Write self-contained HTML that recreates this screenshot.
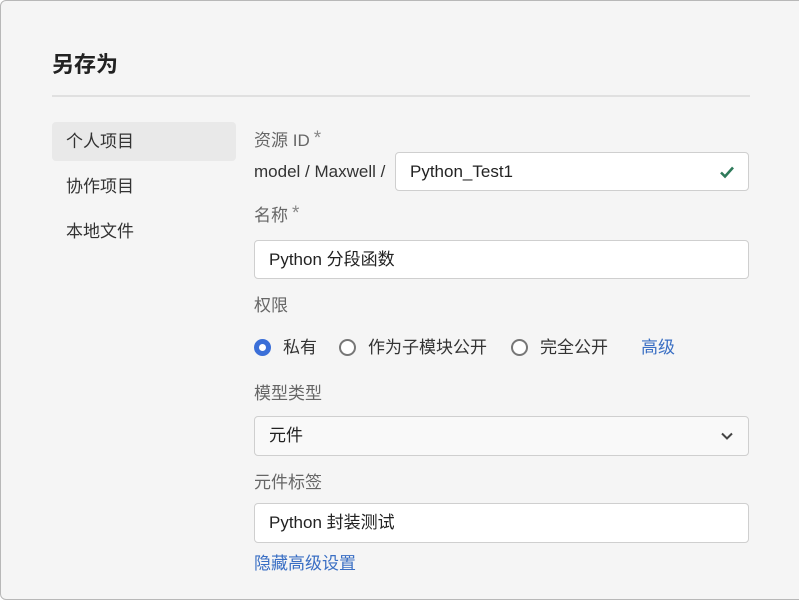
<!DOCTYPE html>
<html><head><meta charset="utf-8"><style>
*{box-sizing:border-box;margin:0;padding:0}
body{width:799px;height:579px;overflow:hidden;background:#fff;font-family:"Liberation Sans","Noto Sans CJK SC",sans-serif;color:#333}
.dlg{position:absolute;left:0;top:0;width:812px;height:600px;background:#f5f5f5;border:1px solid #b8b8b8;border-radius:6px}
.abs{position:absolute;white-space:nowrap}
.title{left:52px;top:52px;font-size:22px;line-height:26px;font-weight:bold;color:#222}
.hr{left:52px;top:95px;width:698px;height:2px;background:#e0e0e0}
.side{left:52px;width:184px;height:39px;font-size:17px;line-height:39px;padding-left:14px;color:#333;border-radius:4px}
.lbl{left:254px;font-size:17px;line-height:20px;color:#666}
.lbl i{font-style:normal;color:#888;font-size:19px;margin-left:4px;position:relative;top:-2px}
.inp{background:#fff;border:1px solid #cfcfcf;border-radius:4px;font-size:17px;line-height:37px;padding-left:14px;color:#222}
.rad{width:17px;height:17px;border-radius:50%;border:2px solid #777;background:#fff}
.txt{font-size:17px;line-height:20px;color:#333}
a{color:#3a6fc4;text-decoration:none}
</style></head><body>
<div class="dlg"></div>
<div class="abs title">另存为</div>
<div class="abs hr"></div>
<div class="abs side" style="top:122px;background:#e9e9e9">个人项目</div>
<div class="abs side" style="top:167px">协作项目</div>
<div class="abs side" style="top:212px">本地文件</div>

<div class="abs lbl" style="top:131px">资源 ID<i>*</i></div>
<div class="abs txt" style="left:254px;top:162px">model / Maxwell /</div>
<div class="abs inp" style="left:395px;top:152px;width:354px;height:39px">Python_Test1
<svg style="position:absolute;right:13px;top:12px" width="16" height="14" viewBox="0 0 16 14"><path d="M2 7.5L6 11.5L14 2.5" fill="none" stroke="#2e7a5a" stroke-width="2.6"/></svg></div>

<div class="abs lbl" style="top:206px">名称<i>*</i></div>
<div class="abs inp" style="left:254px;top:240px;width:495px;height:39px">Python 分段函数</div>

<div class="abs lbl" style="top:296px">权限</div>
<div class="abs rad" style="left:254px;top:339px;border:5px solid #3b6fd8"></div>
<div class="abs txt" style="left:283px;top:338px">私有</div>
<div class="abs rad" style="left:339px;top:339px"></div>
<div class="abs txt" style="left:368px;top:338px">作为子模块公开</div>
<div class="abs rad" style="left:511px;top:339px"></div>
<div class="abs txt" style="left:540px;top:338px">完全公开</div>
<div class="abs txt" style="left:641px;top:338px"><a>高级</a></div>

<div class="abs lbl" style="top:384px">模型类型</div>
<div class="abs inp" style="left:254px;top:416px;width:495px;height:40px;background:#f9f9f9">元件
<svg style="position:absolute;right:14px;top:13px" width="14" height="12" viewBox="0 0 14 12"><path d="M2 3.5L7 8.5L12 3.5" fill="none" stroke="#444" stroke-width="2"/></svg></div>

<div class="abs lbl" style="top:473px">元件标签</div>
<div class="abs inp" style="left:254px;top:503px;width:495px;height:40px">Python 封装测试</div>
<div class="abs txt" style="left:254px;top:554px"><a>隐藏高级设置</a></div>
</body></html>
